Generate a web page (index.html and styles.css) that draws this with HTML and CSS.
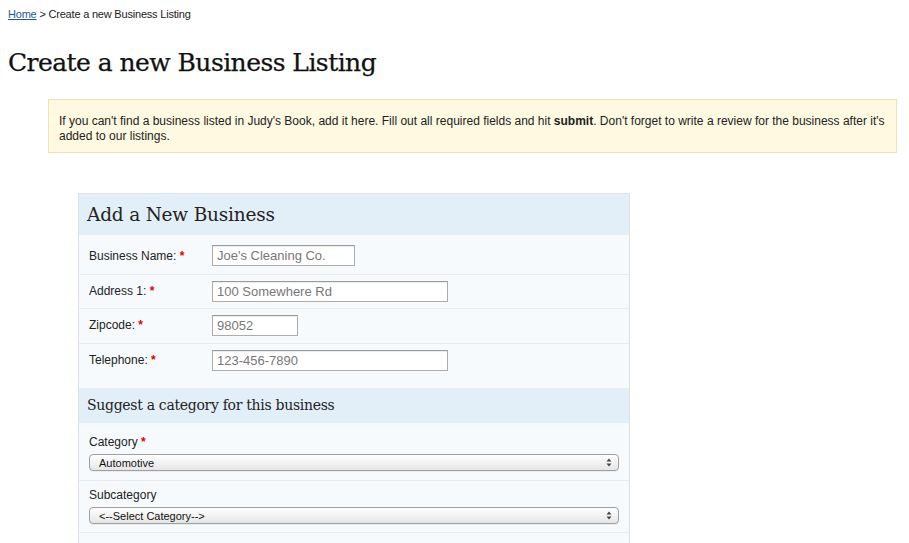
FILE: index.html
```html
<!DOCTYPE html>
<html lang="en">
<head>
<meta charset="utf-8">
<title>Create a new Business Listing</title>
<link rel="stylesheet" href="styles.css">
</head>
<body>
<div class="crumbs"><a href="#">Home</a> &gt; Create a new Business Listing</div>
<h1 class="page-title">Create a new Business Listing</h1>
<div class="notice">If you can't find a business listed in Judy's Book, add it here. Fill out all required fields and hit <b>submit</b>. Don't forget to write a review for the business after it's<br>added to our listings.</div>

<div class="panel">
  <h2 class="panel-head">Add a New Business</h2>
  <div class="row first">
    <label class="lbl">Business Name: <span class="req">*</span></label>
    <input class="field w-name" type="text" value="Joe's Cleaning Co.">
  </div>
  <div class="row">
    <label class="lbl">Address 1: <span class="req">*</span></label>
    <input class="field w-long" type="text" value="100 Somewhere Rd">
  </div>
  <div class="row third">
    <label class="lbl">Zipcode: <span class="req">*</span></label>
    <input class="field w-zip" type="text" value="98052">
  </div>
  <div class="row last">
    <label class="lbl">Telephone: <span class="req">*</span></label>
    <input class="field w-long" type="text" value="123-456-7890">
  </div>
  <h3 class="sub-head">Suggest a category for this business</h3>
  <div class="row stack cat">
    <div class="lbl">Category <span class="req">*</span></div>
    <div class="select"><span>Automotive</span>
      <svg width="6" height="9" viewBox="0 0 6 9"><path d="M3 0.5L5.5 3.5H0.5Z M3 8.5L5.5 5.5H0.5Z" fill="#444"/></svg>
    </div>
  </div>
  <div class="row stack subcat">
    <div class="lbl">Subcategory</div>
    <div class="select"><span>&lt;--Select Category--&gt;</span>
      <svg width="6" height="9" viewBox="0 0 6 9"><path d="M3 0.5L5.5 3.5H0.5Z M3 8.5L5.5 5.5H0.5Z" fill="#444"/></svg>
    </div>
  </div>
  <div class="row spacer"></div>
</div>
</body>
</html>
```
FILE: styles.css
```css
html, body {
  margin: 0;
  padding: 0;
  background: #fff;
}
body {
  padding: 8px;
  font-family: "Liberation Sans", Arial, sans-serif;
  color: #222;
}
.crumbs {
  font-size: 11px;
  line-height: 13px;
  color: #222;
  letter-spacing: -0.2px;
}
.crumbs a {
  color: #1b5c94;
  text-decoration: underline;
}
.page-title {
  font-family: "DejaVu Serif", Georgia, serif;
  font-weight: normal;
  font-size: 25px;
  line-height: 34px;
  margin: 25px 0 19px 0;
  color: #111;
  letter-spacing: -0.55px;
  -webkit-text-stroke: 0.25px #111;
}
.notice {
  margin: 0 4px 0 40px;
  background: #fef9e0;
  border: 1px solid #ece3b6;
  padding: 14px 10px 8px 10px;
  font-size: 12px;
  line-height: 15px;
  color: #222;
}
.notice b {
  font-weight: bold;
}
.panel {
  margin: 40px 0 0 70px;
  width: 550px;
  border: 1px solid #dae3ea;
  border-bottom: none;
  background: #f6fafd;
}
.panel-head {
  margin: 0;
  background: #e3eff8;
  font-family: "DejaVu Serif", Georgia, serif;
  font-weight: normal;
  font-size: 18.5px;
  line-height: 41px;
  height: 41px;
  padding: 0 8px;
  color: #222;
  letter-spacing: -0.2px;
}
.sub-head {
  margin: 0;
  background: #e3eff8;
  font-family: "DejaVu Serif", Georgia, serif;
  font-weight: normal;
  font-size: 14px;
  line-height: 35px;
  height: 35px;
  padding: 0 8px;
  color: #222;
  letter-spacing: -0.3px;
}
.row {
  display: flex;
  align-items: center;
  padding: 6px 10px 6px 10px;
  border-bottom: 1px solid #e7eef3;
}
.row.first {
  padding-top: 10px;
  padding-bottom: 8px;
}
.row.first .lbl {
  padding-top: 2px;
}
.row.third {
  padding-bottom: 7px;
}
.row.last {
  padding-bottom: 17px;
  border-bottom: none;
}
.row.stack {
  flex-direction: column;
  align-items: stretch;
}
.row.cat {
  padding: 12px 10px 9px 10px;
}
.row.subcat {
  padding: 7px 10px 8px 10px;
}
.row.stack .lbl {
  width: auto;
  margin-bottom: 4px;
  font-size: 12px;
}
.row.spacer {
  border-bottom: none;
  height: 10px;
  padding: 0;
}
.lbl {
  width: 123px;
  font-size: 12px;
  line-height: 15px;
  color: #222;
}
.req {
  color: #e00000;
  font-weight: bold;
}
.field {
  box-sizing: border-box;
  height: 21px;
  border: 1px solid #adadad;
  border-top-color: #9a9a9a;
  padding: 0 4px;
  margin: 0;
  font-family: "Liberation Sans", Arial, sans-serif;
  font-size: 13px;
  color: #777;
  background: #fff;
  box-shadow: inset 0 1px 1px rgba(0,0,0,0.08);
}
.w-name { width: 143px; }
.w-long { width: 236px; }
.w-zip { width: 86px; }
.select {
  box-sizing: border-box;
  height: 17px;
  display: flex;
  align-items: center;
  justify-content: space-between;
  padding: 0 6px 0 9px;
  border: 1px solid #9f9f9f;
  border-radius: 4px;
  background: linear-gradient(#ffffff, #f0f0f0 60%, #e6e6e6);
  font-size: 11px;
  color: #111;
  box-shadow: 0 1px 0 rgba(0,0,0,0.05);
}
.select svg {
  display: block;
}
```
